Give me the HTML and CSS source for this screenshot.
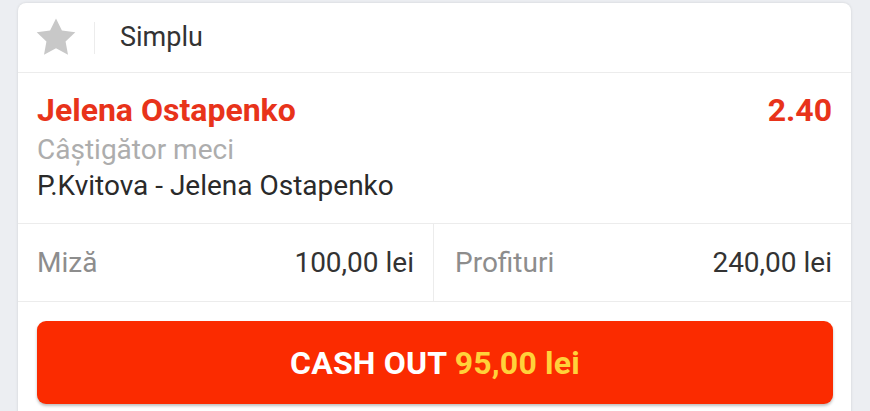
FILE: index.html
```html
<!DOCTYPE html>
<html>
<head>
<meta charset="utf-8">
<link rel="stylesheet" href="styles.css">
</head>
<body>
<div class="card">
  <div class="head">
    <svg class="star" width="42" height="40" viewBox="0 0 24 23"><path d="M12 0.8l3.4 7 7.7 1-5.6 5.3 1.4 7.6L12 18l-6.9 3.7 1.4-7.6L0.9 8.8l7.7-1z" fill="#c8c8c8"/></svg>
    <span class="vsep"></span>
    <span class="title">Simplu</span>
  </div>
  <div class="sel">
    <div class="row1">
      <span class="name">Jelena Ostapenko</span>
      <span class="odd">2.40</span>
    </div>
    <div class="market">Câștigător meci</div>
    <div class="event">P.Kvitova - Jelena Ostapenko</div>
  </div>
  <div class="stake">
    <div class="cell left"><span class="lbl">Miză</span><span class="val">100,00 lei</span></div>
    <div class="cell right"><span class="lbl">Profituri</span><span class="val">240,00 lei</span></div>
  </div>
  <div class="actions">
    <button class="cash">CASH OUT <span class="amt">95,00 lei</span></button>
  </div>
</div>
</body>
</html>
```
FILE: styles.css
```css
html, body { margin: 0; padding: 0; }
body {
  background: #eceef2;
  font-family: Roboto, "Noto Sans", sans-serif;
  width: 870px; height: 411px; overflow: hidden;
}
.card {
  margin: 3px 19px 0 18px;
  background: #fff;
  border-radius: 8px 8px 0 0;
  box-shadow: 0 0 3px rgba(0,0,0,0.12);
  height: 420px;
}
.head {
  height: 69px;
  display: flex;
  align-items: center;
  padding-left: 17px;
  border-bottom: 1px solid #ececec;
}
.star { display: block; margin-top: -2px; }
.vsep { width: 1px; height: 32px; background: #ececec; margin-left: 17px; }
.title { margin-left: 25px; font-size: 27px; color: #333; line-height: 36px; margin-top: -1px; }
.sel { padding: 19px 19px 0 19px; border-bottom: 1px solid #ececec; box-sizing: border-box; height: 151px; }
.row1 { display: flex; justify-content: space-between; align-items: baseline; height: 36px; line-height: 36px; }
.name, .odd { font-size: 32px; font-weight: 700; color: #e8331a; }
.market { font-size: 28px; color: #adadad; height: 36px; line-height: 36px; margin-top: 4px; }
.event { font-size: 28px; color: #2a2a2a; height: 36px; line-height: 36px; }
.stake { display: flex; height: 77px; border-bottom: 1px solid #ececec; }
.cell { flex: 1; display: flex; justify-content: space-between; align-items: center; font-size: 28px; }
.cell.left { padding: 0 19px 0 19px; border-right: 1px solid #ececec; }
.cell.right { padding: 0 19px 0 21px; }
.lbl { color: #8d8d8d; }
.val { color: #333; }
.actions { padding: 19px 18px 0 19px; }
.cash {
  display: block; width: 100%; height: 83px;
  background: #fb2b00; border: none; border-radius: 9px;
  color: #fff; font-family: Roboto, sans-serif; font-weight: 700; font-size: 32px;
  letter-spacing: 0.2px;
  box-shadow: 0 2px 3px rgba(0,0,0,0.25);
}
.amt { color: #ffd23a; }
```
